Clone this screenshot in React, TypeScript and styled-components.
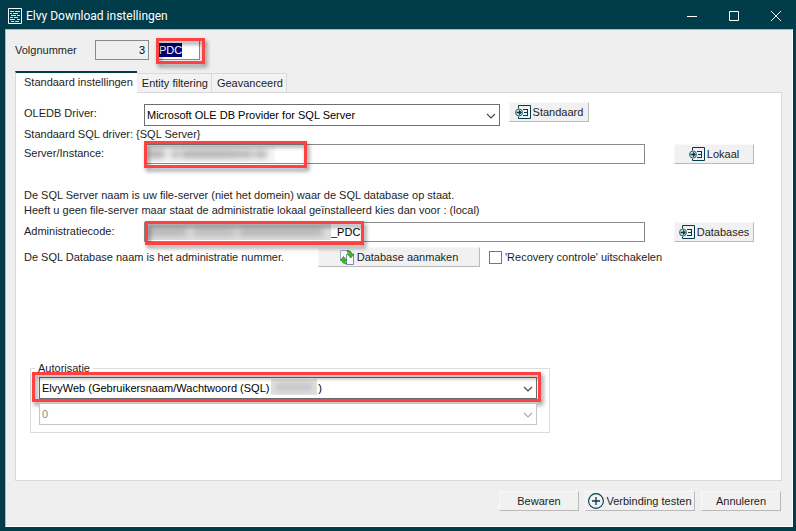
import React, { useId, useState } from "react";
import styled, { createGlobalStyle, css } from "styled-components";

const teal = "#003c4a";
const red = "#ff4142";

const GlobalStyle = createGlobalStyle`
  *, *::before, *::after { box-sizing: border-box; }
  html, body { margin: 0; background: ${teal}; }
  body, button, input, select { font: 11px/13px "Liberation Sans", Arial, sans-serif; color: #1e1e1e; }
`;

const Window = styled.div`
  display: flex;
  flex-direction: column;
  min-height: 100vh;
  padding: 0 3px 4px 5px;
  background: ${teal};
`;

const TitleBar = styled.header`
  display: flex;
  align-items: center;
  height: 29px;
  padding: 3px 9px 0 3px;
  color: #fff;
`;

const Title = styled.h1`
  flex: 1;
  margin: 0 0 0 4px;
  font: 400 12px/16px Roboto, sans-serif;
`;

const WindowButtons = styled.div`
  display: flex;
  gap: 26px;
`;

const WindowButton = styled.button`
  display: flex;
  padding: 0;
  border: 0;
  background: none;
  color: #fff;
`;

const Client = styled.main`
  display: flex;
  flex: 1;
  flex-direction: column;
  padding: 10px 10px 15px 9px;
  border: 1px solid #b4b4b4;
  border-right-color: #fff;
  border-bottom-color: #fff;
  background: #efefef;
`;

const Header = styled.div`
  display: flex;
  align-items: center;
  height: 20px;
`;

const HeaderLabel = styled.label`
  width: 80px;
`;

const TextInput = styled.input<{ $inset?: number }>`
  width: 100%;
  height: 20px;
  padding: 0 3px 0 ${(p) => p.$inset ?? 1}px;
  border: 1px solid #898989;
  border-radius: 0;
  outline: 0;
  background: #fff;
  color: #000;
`;

const NumberInput = styled(TextInput)`
  width: 54px;
  background: #efefef;
  text-align: right;
`;

const NameInput = styled(TextInput)`
  padding: 0 0 0 1px;
  &::selection { background: #00006e; color: #fff; }
`;

const NameField = styled.div`
  position: relative;
  width: 43px;
  margin-left: 8px;
`;

const SelectedText = styled.span`
  position: absolute;
  top: 3px;
  left: 2px;
  height: 14px;
  background: #000070;
  color: #fff;
  line-height: 14px;
  pointer-events: none;
`;

const Marker = styled.span<{ $width?: number }>`
  position: absolute;
  top: -3px;
  bottom: -4px;
  left: 0;
  ${(p) => (p.$width ? css`width: ${p.$width}px;` : css`right: -4px;`)}
  border: 3px solid ${red};
  filter: drop-shadow(2px 3px 2px rgba(0, 0, 0, 0.45));
  pointer-events: none;
`;

const NameMarker = styled(Marker)`
  top: -2px;
  left: -1px;
  right: -5px;
`;

const CodeMarker = styled(Marker)`
  top: -1px;
  bottom: -3px;
  left: 1px;
`;

const AuthMarker = styled(Marker)`
  top: -5px;
  left: -7px;
  bottom: -3px;
`;

const Tabs = styled.div`
  display: flex;
  align-items: flex-end;
  margin-top: 11px;
`;

const Tab = styled.button<{ $active?: boolean }>`
  height: 19px;
  padding: 0 3px 0 5px;
  border: 1px solid #d9d9d9;
  border-width: 1px 1px 0 0;
  background: #f2f2f2;
  white-space: nowrap;
  ${(p) =>
    p.$active &&
    css`
      z-index: 1;
      height: 22px;
      margin-bottom: -1px;
      padding: 0 4px 1px 8px;
      border-width: 2px 0 0 1px;
      border-color: ${teal} #d9d9d9 #d9d9d9;
      background: #fff;
    `}
`;

const Panel = styled.section`
  flex: 1;
  padding: 11px 27px 10px 8px;
  border: 1px solid #d9d9d9;
  background: #fff;
`;

const Row = styled.div`
  display: flex;
  align-items: flex-start;
  min-height: 22px;
`;

const FieldLabel = styled.label`
  flex: 0 0 120px;
  padding-top: 3px;
`;

const Field = styled.div<{ $basis?: number }>`
  position: relative;
  flex: ${(p) => (p.$basis ? `0 1 ${p.$basis}px` : "1")};
  min-width: 0;
`;

const ServerRow = styled(Row)`
  margin-top: 2px;
`;

const CodeRow = styled(Row)`
  margin-top: 4px;
`;

const DatabaseRow = styled(Row)`
  align-items: center;
  margin-top: 2px;
`;

const Note = styled.p`
  margin: 0;
  line-height: 15px;
`;

const DriverNote = styled(Note)`
  margin-top: 1px;
`;

const Hint = styled(Note)`
  margin-top: 22px;
`;

const Action = styled.button<{ $width?: number }>`
  display: flex;
  flex: 0 0 ${(p) => p.$width ?? 80}px;
  align-items: center;
  justify-content: center;
  gap: 2px;
  height: 20px;
  padding: 0;
  border: 1px solid #f8f8f8;
  border-right-color: #b9b9b9;
  border-bottom-color: #b9b9b9;
  background: #f1f1f1;
  white-space: nowrap;
`;

const SideAction = styled(Action)`
  margin-left: 29px;
`;

const DriverAction = styled(Action)`
  margin: -2px 0 0 9px;
`;

const DatabaseText = styled.p`
  flex: 0 0 294px;
  margin: 0;
`;

const CheckLabel = styled.label`
  display: flex;
  align-items: center;
  gap: 3px;
  margin-left: 9px;
`;

const CheckBox = styled.input`
  appearance: none;
  width: 13px;
  height: 13px;
  margin: 0;
  border: 1px solid #777;
  background: #fff;
  &:checked { box-shadow: inset 0 0 0 3px #fff; background: ${teal}; }
`;

const Dropdown = styled.select`
  appearance: none;
  display: block;
  width: 100%;
  height: 22px;
  padding: 0 20px 0 2px;
  border: 1px solid #6e6e6e;
  border-radius: 0;
  outline: 0;
  background: #fff;
  color: #000;
  &:disabled { border-color: #c6c6c6; color: #8c8c8c; opacity: 1; }
`;

const ArrowSvg = styled.svg`
  position: absolute;
  top: 9px;
  right: 4px;
  pointer-events: none;
`;

const Group = styled.fieldset`
  width: 520px;
  max-width: 100%;
  margin: 94px 0 0 6px;
  padding: 2px 12px 7px 8px;
  border: 1px solid #dcdcdc;
`;

const Legend = styled.legend`
  margin-left: -4px;
  padding: 0 3px;
`;

const SecondField = styled(Field)`
  margin-top: 4px;
`;

const RedactionSvg = styled.svg<{ $left: number }>`
  position: absolute;
  top: 2px;
  left: ${(p) => p.$left}px;
  pointer-events: none;
`;

const Footer = styled.footer`
  display: flex;
  justify-content: flex-end;
  gap: 6px;
  margin-top: 10px;
  padding-right: 1px;
`;

function AppIcon() {
  return (
    <svg width="14" height="17" viewBox="0 0 14 17" fill="none" stroke="#fff" aria-hidden="true">
      <path d="M.5.5h13v15H.5z" />
      <path d="M2 3.5h4M7 3.5h5M2 5.5h2M5 5.5h5M3 7.5h5M9 7.5h3M2 9.5h3M6 9.5h4M2 11.5h5M9 11.5h3M3 13.5h3M7 13.5h4" opacity=".85" />
    </svg>
  );
}

function PickIcon() {
  return (
    <svg width="16" height="15" viewBox="0 0 16 15" fill="none" stroke={teal} aria-hidden="true">
      <path d="M3.5 3.5v-3h12v13h-12v-2" />
      <path d="M8 4.5h5M9 7.5h4M8 10.5h5M12.5 4v7" />
      <circle cx="4" cy="7.5" r="3.5" fill="#dce6e8" stroke="#315f69" />
      <path d="M1.5 7.5H6M4 5.5l2 2-2 2" strokeWidth="1.3" />
    </svg>
  );
}

function RefreshIcon() {
  return (
    <svg width="15" height="15" viewBox="0 0 15 15" aria-hidden="true">
      <path d="M.5.5h7v10h-7z" fill="#f7f9fd" stroke="#a3aec2" />
      <path d="M6.5 4.5h7v10h-7z" fill="#f7f9fd" stroke="#7f8eab" />
      <path d="M7 .7c2.600-.6 4.600.8 4.700 3.300H14l-3.200 4L7.500 4h1.900C9.400 2.600 8.600 1.600 7 1.500z" fill="#43b52f" stroke="#19751a" strokeWidth=".6" />
      <path d="M6.500 13.800C3.800 14 2.300 12.800 2.200 10.500H.3L3.500 6.500l3.200 4H4.800c.1 1.300.7 2 1.700 2.300z" fill="#43b52f" stroke="#19751a" strokeWidth=".6" />
    </svg>
  );
}

function PlusIcon() {
  return (
    <svg width="16" height="16" viewBox="0 0 16 16" fill="none" stroke={teal} aria-hidden="true">
      <circle cx="8" cy="8" r="7.4" strokeWidth="1.1" />
      <path d="M4 8h8M8 4v8" strokeWidth="1.3" />
    </svg>
  );
}

function Arrow({ muted }: { muted?: boolean }) {
  return (
    <ArrowSvg width="10" height="6" viewBox="0 0 10 6" fill="none" stroke={muted ? "#ababab" : "#4a4a4a"} aria-hidden="true">
      <path d="M1 1l4 4 4-4" strokeWidth="1.2" />
    </ArrowSvg>
  );
}

type Smudge = [x: number, width: number, opacity: number];

function Redaction({ left, width, shade, marks }: { left: number; width: number; shade: string; marks: Smudge[] }) {
  const id = useId();
  return (
    <RedactionSvg $left={left} width={width} height="16" aria-hidden="true">
      <defs>
        <filter id={id} x="-20%" y="-100%" width="140%" height="300%">
          <feGaussianBlur stdDeviation="3" />
        </filter>
      </defs>
      <rect width={width} height="16" fill={shade} />
      <g filter={`url(#${id})`}>
        {marks.map(([x, w, opacity]) => (
          <rect key={x} x={x} y="4" width={w} height="8" fill="#666" opacity={opacity} />
        ))}
      </g>
    </RedactionSvg>
  );
}

export default function App() {
  const [name, setName] = useState("PDC");
  const [server, setServer] = useState("");
  const [code, setCode] = useState("_PDC");

  return (
    <>
      <GlobalStyle />
      <Window>
        <TitleBar>
          <AppIcon />
          <Title>Elvy Download instellingen</Title>
          <WindowButtons>
            <WindowButton aria-label="Minimaliseren">
              <svg width="16" height="12" fill="none" stroke="currentColor"><path d="M3 6.5h10" /></svg>
            </WindowButton>
            <WindowButton aria-label="Maximaliseren">
              <svg width="16" height="12" fill="none" stroke="currentColor"><path d="M3.500 1.500h9v9h-9z" /></svg>
            </WindowButton>
            <WindowButton aria-label="Sluiten">
              <svg width="16" height="12" fill="none" stroke="currentColor"><path d="M3 1l10 10M13 1L3 11" /></svg>
            </WindowButton>
          </WindowButtons>
        </TitleBar>

        <Client>
          <Header>
            <HeaderLabel htmlFor="number">Volgnummer</HeaderLabel>
            <NumberInput id="number" value="3" readOnly />
            <NameField>
              <NameInput aria-label="Naam" value={name} onChange={(e) => setName(e.target.value)} />
              {name === "PDC" && <SelectedText aria-hidden="true">PDC</SelectedText>}
              <NameMarker />
            </NameField>
          </Header>

          <Tabs role="tablist">
            <Tab role="tab" aria-selected="true" $active>Standaard instellingen</Tab>
            <Tab role="tab" aria-selected="false">Entity filtering</Tab>
            <Tab role="tab" aria-selected="false">Geavanceerd</Tab>
          </Tabs>

          <Panel role="tabpanel">
            <Row>
              <FieldLabel htmlFor="driver">OLEDB Driver:</FieldLabel>
              <Field $basis={356}>
                <Dropdown id="driver">
                  <option>Microsoft OLE DB Provider for SQL Server</option>
                </Dropdown>
                <Arrow />
              </Field>
              <DriverAction><PickIcon />Standaard</DriverAction>
            </Row>
            <DriverNote>Standaard SQL driver: {"{SQL Server}"}</DriverNote>

            <ServerRow>
              <FieldLabel htmlFor="server">Server/Instance:</FieldLabel>
              <Field>
                <TextInput id="server" value={server} onChange={(e) => setServer(e.target.value)} />
                <Redaction left={3} width={128} shade="#f6f6f6" marks={[[0, 18, 0.5], [24, 8, 0.45], [34, 54, 0.5], [88, 18, 0.45], [108, 12, 0.45]]} />
                <Marker $width={163} />
              </Field>
              <SideAction><PickIcon />Lokaal</SideAction>
            </ServerRow>

            <Hint>De SQL Server naam is uw file-server (niet het domein) waar de SQL database op staat.</Hint>
            <Note>Heeft u geen file-server maar staat de administratie lokaal geïnstalleerd kies dan voor : (local)</Note>

            <CodeRow>
              <FieldLabel htmlFor="code">Administratiecode:</FieldLabel>
              <Field>
                <TextInput id="code" $inset={186} value={code} onChange={(e) => setCode(e.target.value)} />
                <Redaction left={3} width={184} shade="#dedede" marks={[[0, 40, 0.35], [46, 42, 0.3], [92, 84, 0.35]]} />
                <CodeMarker $width={219} />
              </Field>
              <SideAction><PickIcon />Databases</SideAction>
            </CodeRow>

            <DatabaseRow>
              <DatabaseText>De SQL Database naam is het administratie nummer.</DatabaseText>
              <Action $width={162}><RefreshIcon />Database aanmaken</Action>
              <CheckLabel><CheckBox type="checkbox" />'Recovery controle' uitschakelen</CheckLabel>
            </DatabaseRow>

            <Group>
              <Legend>Autorisatie</Legend>
              <Field>
                <Dropdown aria-label="Autorisatie">
                  <option>{"ElvyWeb (Gebruikersnaam/Wachtwoord (SQL)" + "\u00a0".repeat(16) + ")"}</option>
                </Dropdown>
                <Arrow />
                <Redaction left={232} width={46} shade="#e2e2e2" marks={[[4, 38, 0.25]]} />
                <AuthMarker />
              </Field>
              <SecondField>
                <Dropdown aria-label="Autorisatienummer" disabled>
                  <option>0</option>
                </Dropdown>
                <Arrow muted />
              </SecondField>
            </Group>
          </Panel>

          <Footer>
            <Action>Bewaren</Action>
            <Action $width={110}><PlusIcon />Verbinding testen</Action>
            <Action>Annuleren</Action>
          </Footer>
        </Client>
      </Window>
    </>
  );
}
